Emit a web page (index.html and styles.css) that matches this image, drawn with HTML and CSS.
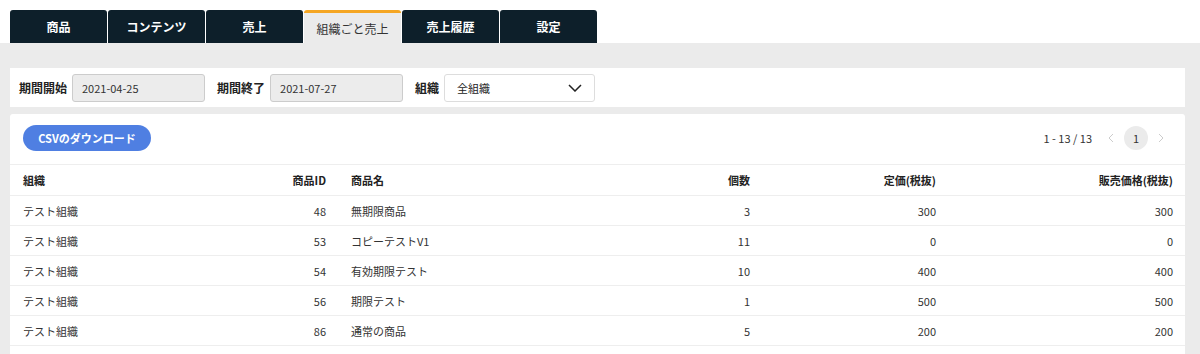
FILE: index.html
```html
<!DOCTYPE html>
<html lang="ja">
<head>
  <meta charset="UTF-8">
  <meta name="viewport" content="width=device-width, initial-scale=1.0">
  <title>組織ごと売上</title>
  <link rel="stylesheet" href="styles.css">
</head>
<body>
  <div class="tab-bar">
    <a class="tab">商品</a>
    <a class="tab">コンテンツ</a>
    <a class="tab">売上</a>
    <a class="tab active">組織ごと売上</a>
    <a class="tab">売上履歴</a>
    <a class="tab">設定</a>
  </div>

  <div class="main">
    <div class="filter-panel">
      <label class="filter-label">期間開始</label>
      <div class="date-input">2021-04-25</div>
      <label class="filter-label">期間終了</label>
      <div class="date-input">2021-07-27</div>
      <label class="filter-label">組織</label>
      <div class="org-select">
        <span>全組織</span>
        <svg width="14" height="8" viewBox="0 0 14 8"><path d="M1 1l6 6 6-6" fill="none" stroke="#222" stroke-width="1.5"/></svg>
      </div>
    </div>

    <div class="card">
      <div class="card-top">
        <button class="csv-btn">CSVのダウンロード</button>
        <div class="pager">
          <span class="pager-count">1 - 13 / 13</span>
          <svg class="pager-arrow" width="6" height="10" viewBox="0 0 6 10"><path d="M5 1L1 5l4 4" fill="none" stroke="#ccc" stroke-width="1"/></svg>
          <span class="pager-page">1</span>
          <svg class="pager-arrow" width="6" height="10" viewBox="0 0 6 10"><path d="M1 1l4 4-4 4" fill="none" stroke="#ccc" stroke-width="1"/></svg>
        </div>
      </div>

      <table class="sales-table">
        <colgroup>
          <col style="width: 13px">
          <col style="width: 180px">
          <col style="width: 123px">
          <col style="width: 25px">
          <col style="width: 280px">
          <col style="width: 119px">
          <col style="width: 186px">
          <col style="width: 237px">
          <col>
        </colgroup>
        <thead>
          <tr>
            <th></th>
            <th class="left">組織</th>
            <th class="right">商品ID</th>
            <th></th>
            <th class="left">商品名</th>
            <th class="right">個数</th>
            <th class="right">定価(税抜)</th>
            <th class="right">販売価格(税抜)</th>
            <th></th>
          </tr>
        </thead>
        <tbody id="rows"></tbody>
      </table>
    </div>
  </div>

  <script>
    const rows = [
      ["テスト組織", 48, "無期限商品", 3, 300, 300],
      ["テスト組織", 53, "コピーテストV1", 11, 0, 0],
      ["テスト組織", 54, "有効期限テスト", 10, 400, 400],
      ["テスト組織", 56, "期限テスト", 1, 500, 500],
      ["テスト組織", 86, "通常の商品", 5, 200, 200]
    ];
    const tbody = document.getElementById("rows");
    rows.forEach(r => {
      const tr = document.createElement("tr");
      tr.innerHTML = `<td></td><td class="left">${r[0]}</td><td class="right">${r[1]}</td><td></td>` +
        `<td class="left">${r[2]}</td><td class="right">${r[3]}</td><td class="right">${r[4]}</td>` +
        `<td class="right">${r[5]}</td><td></td>`;
      tbody.appendChild(tr);
    });
  </script>
</body>
</html>
```

FILE: styles.css
```css
body {
  margin: 0;
  font-family: "Noto Sans CJK JP", "Noto Sans", sans-serif;
  color: #333;
  background: #ebebeb;
  overflow: hidden;
}
.tab-bar {
  display: flex;
  gap: 1px;
  background: #fff;
  padding: 10px 10px 0;
  height: 33px;
}
.tab {
  width: 97px;
  height: 33px;
  background: #0d1f2a;
  color: #fff;
  font-size: 12px;
  font-weight: bold;
  display: flex;
  align-items: center;
  justify-content: center;
  border-radius: 3px 3px 0 0;
  box-sizing: border-box;
}
.tab.active {
  background: #ebebeb;
  color: #333;
  font-weight: normal;
  border-top: 3px solid #f5a623;
}
.main {
  padding: 25px 15px 0 10px;
}
.filter-panel {
  background: #fff;
  height: 39px;
  display: flex;
  align-items: center;
  padding: 0 9px;
}
.filter-label {
  font-size: 12px;
  font-weight: bold;
  color: #222;
  margin-right: 5px;
}
.date-input {
  width: 133px;
  height: 28px;
  box-sizing: border-box;
  background: #ececec;
  border: 1px solid #ccc;
  border-radius: 3px;
  font-size: 11px;
  color: #333;
  display: flex;
  align-items: center;
  padding-left: 9px;
  margin-right: 12px;
}
.org-select {
  width: 151px;
  height: 28px;
  box-sizing: border-box;
  border: 1px solid #ddd;
  border-radius: 3px;
  font-size: 11px;
  color: #222;
  display: flex;
  align-items: center;
  justify-content: space-between;
  padding: 0 12px;
}
.card {
  background: #fff;
  margin-top: 7px;
  border-radius: 3px 3px 0 0;
  height: 240px;
}
.card-top {
  display: flex;
  align-items: center;
  justify-content: space-between;
  height: 50px;
  padding: 0 21px 0 13px;
  border-bottom: 1px solid #eee;
}
.csv-btn {
  background: #4f7fe2;
  color: #fff;
  border: none;
  border-radius: 13px;
  width: 128px;
  height: 26px;
  font-family: inherit;
  font-size: 11px;
  font-weight: bold;
  margin-top: -3px;
}
.pager {
  display: flex;
  align-items: center;
  margin-top: -3px;
}
.pager-count {
  font-size: 11px;
  color: #333;
  margin-right: 16px;
}
.pager-page {
  width: 24px;
  height: 24px;
  border-radius: 50%;
  background: #ebebeb;
  font-size: 11px;
  color: #333;
  display: flex;
  align-items: center;
  justify-content: center;
  margin: 0 10px;
}
.sales-table {
  width: 100%;
  border-collapse: collapse;
  table-layout: fixed;
  font-size: 11px;
}
.sales-table th {
  font-weight: bold;
  color: #222;
  height: 30px;
  border-bottom: 1px solid #eee;
  padding: 0;
}
.sales-table td {
  height: 29px;
  border-bottom: 1px solid #eee;
  padding: 0;
  color: #333;
}
.left {
  text-align: left;
}
.right {
  text-align: right;
}
```
